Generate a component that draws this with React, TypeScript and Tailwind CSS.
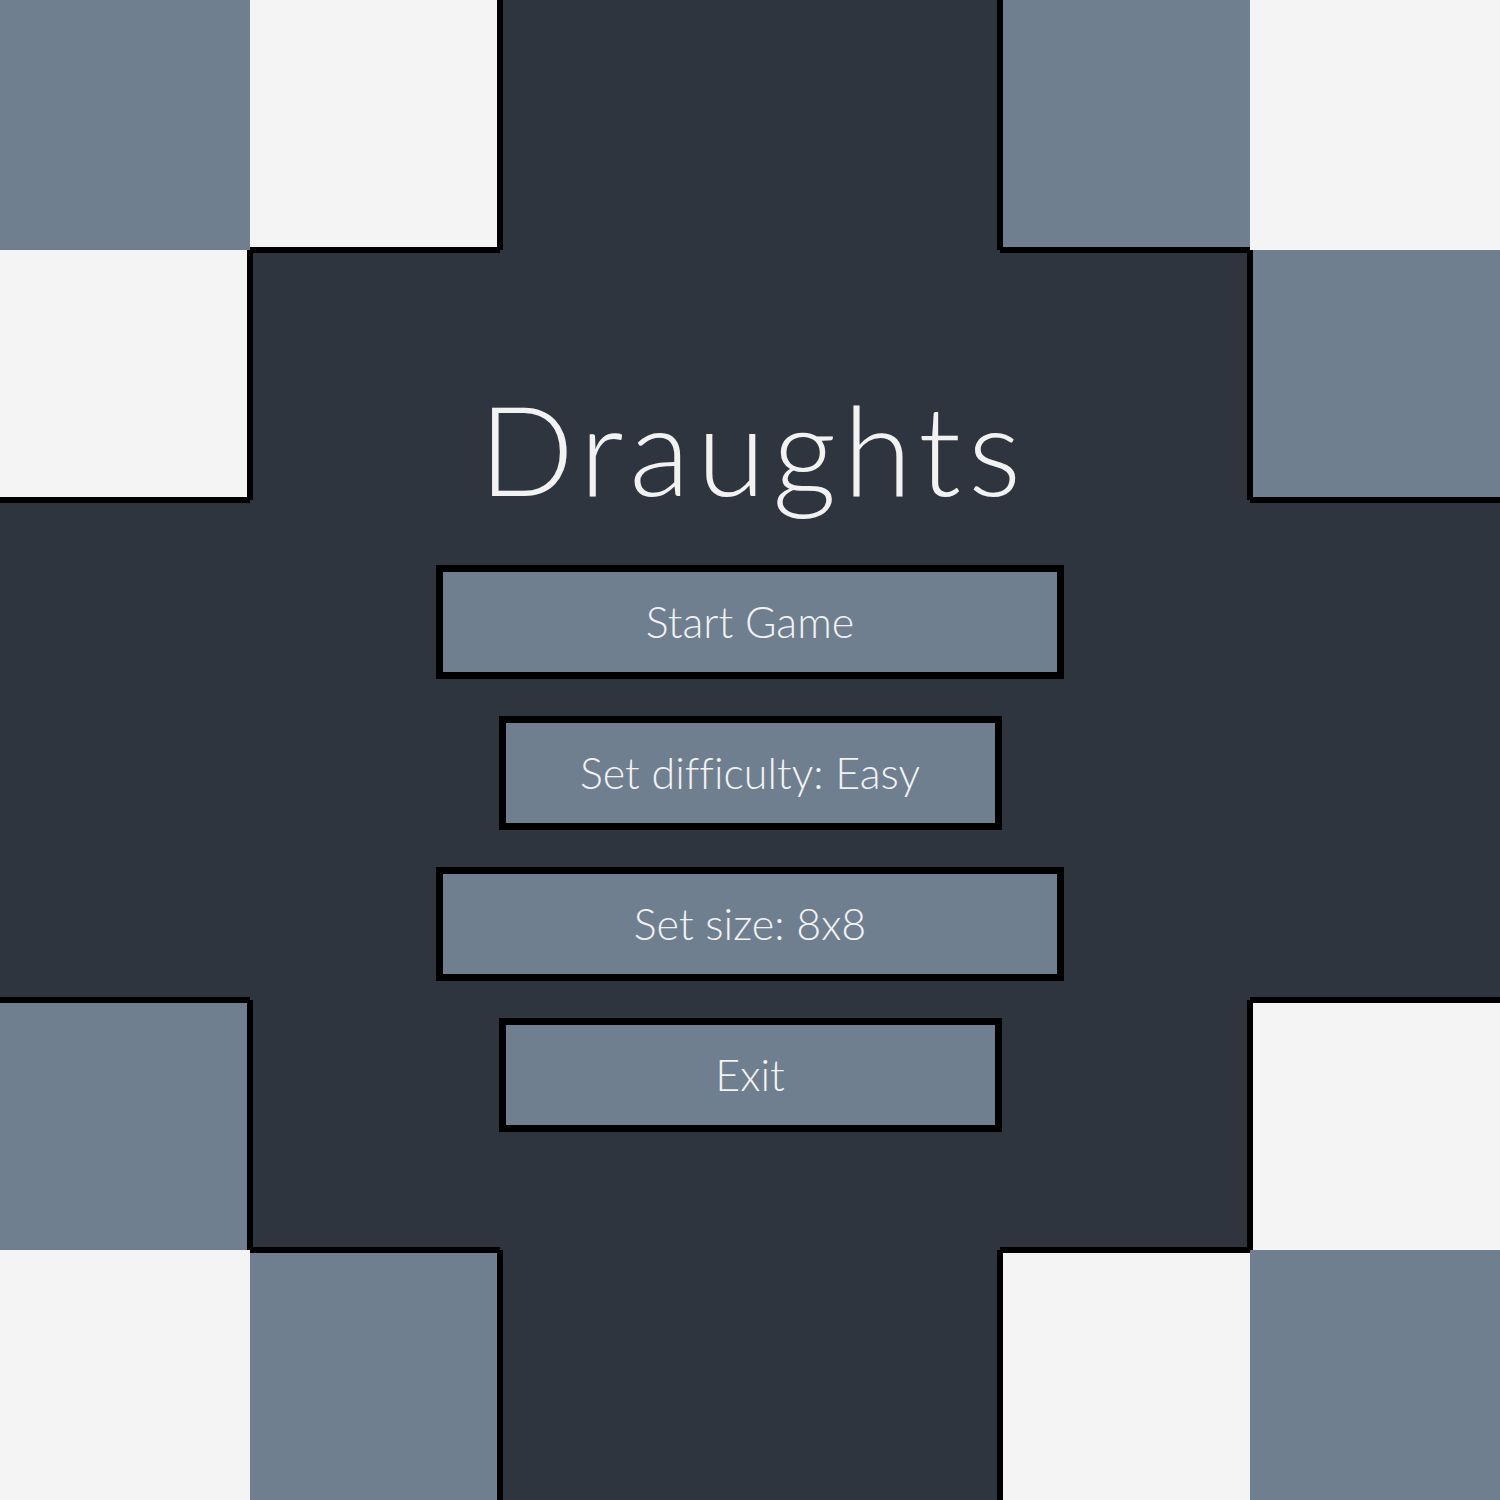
import { useState } from 'react'

const GRAY = 'bg-[#6f7f8f]'
const WHITE = 'bg-[#f4f4f4]'
const DARK = 'bg-[#2f353e]'

// corner cells of the board that stay checkered; the rest is the dark cross
const isOpen = (r: number, c: number) => {
  if ((r === 0 || r === 5) && (c <= 1 || c >= 4)) return true
  if ((r === 1 || r === 4) && (c === 0 || c === 5)) return true
  return false
}

const inBoard = (r: number, c: number) => r >= 0 && r < 6 && c >= 0 && c < 6

const Cell = ({ r, c }: { r: number; c: number }) => {
  const open = isOpen(r, c)
  const edge = (dr: number, dc: number) => inBoard(r + dr, c + dc) && isOpen(r + dr, c + dc) !== open

  const color = open ? ((r + c) % 2 === 0 ? GRAY : WHITE) : DARK

  return (
    <div
      className={[
        'border-black',
        color,
        edge(-1, 0) ? 'border-t-[3px]' : '',
        edge(1, 0) ? 'border-b-[3px]' : '',
        edge(0, -1) ? 'border-l-[3px]' : '',
        edge(0, 1) ? 'border-r-[3px]' : '',
      ].join(' ')}
      style={{ gridRow: r + 1, gridColumn: c + 1 }}
    />
  )
}

const MenuButton = ({ label, wide, onClick }: { label: string; wide?: boolean; onClick?: () => void }) => (
  <button
    className={`flex items-center justify-center h-[114px] border-[7px] border-black bg-[#6f7f8f] text-[43px] font-light text-[#f2f2f2] [font-variant-ligatures:none] ${
      wide ? 'w-[628px]' : 'w-[503px]'
    }`}
    onClick={onClick}
  >
    {label}
  </button>
)

const difficulties = ['Easy', 'Medium', 'Hard']
const sizes = ['8x8', '10x10', '12x12']

export default function App() {
  const [difficulty, setDifficulty] = useState(0)
  const [size, setSize] = useState(0)

  const cells = []
  for (let r = 0; r < 6; r++) {
    for (let c = 0; c < 6; c++) {
      cells.push(<Cell key={`${r}-${c}`} r={r} c={c} />)
    }
  }

  return (
    <div
      className="grid grid-cols-[repeat(6,250px)] grid-rows-[repeat(6,250px)] w-[1500px] h-[1500px] overflow-hidden"
      style={{ fontFamily: '"Century Gothic", Lato, "Open Sans", sans-serif' }}
    >
      {cells}

      <div className="col-start-2 col-span-4 row-start-2 row-span-4 flex flex-col items-center pt-[136px]">
        <h1 className="text-[125px] leading-none font-light tracking-[7px] pl-[7px] text-[#f2f2f2]">Draughts</h1>

        <div className="mt-[54px] flex flex-col items-center gap-[37px]">
          <MenuButton label="Start Game" wide />
          <MenuButton
            label={`Set difficulty: ${difficulties[difficulty]}`}
            onClick={() => setDifficulty((difficulty + 1) % difficulties.length)}
          />
          <MenuButton label={`Set size: ${sizes[size]}`} wide onClick={() => setSize((size + 1) % sizes.length)} />
          <MenuButton label="Exit" />
        </div>
      </div>
    </div>
  )
}
